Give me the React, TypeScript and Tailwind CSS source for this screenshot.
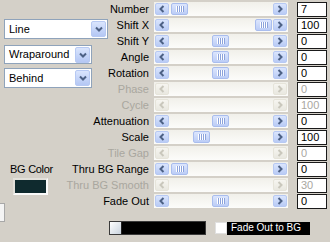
import React from "react";

type Row = { label: string; value: string; enabled: boolean; pos: number };

const rows: Row[] = [
  { label: "Number", value: "7", enabled: true, pos: 2 },
  { label: "Shift X", value: "100", enabled: true, pos: 86 },
  { label: "Shift Y", value: "0", enabled: true, pos: 43 },
  { label: "Angle", value: "0", enabled: true, pos: 43 },
  { label: "Rotation", value: "0", enabled: true, pos: 43 },
  { label: "Phase", value: "0", enabled: false, pos: 0 },
  { label: "Cycle", value: "100", enabled: false, pos: 0 },
  { label: "Attenuation", value: "0", enabled: true, pos: 43 },
  { label: "Scale", value: "100", enabled: true, pos: 24 },
  { label: "Tile Gap", value: "0", enabled: false, pos: 0 },
  { label: "Thru BG Range", value: "0", enabled: true, pos: 2 },
  { label: "Thru BG Smooth", value: "30", enabled: false, pos: 0 },
  { label: "Fade Out", value: "0", enabled: true, pos: 43 },
];

function Arrow({ dir, enabled }: { dir: "left" | "right"; enabled: boolean }) {
  const d = dir === "left" ? "M4.5 1 L1.5 4 L4.5 7" : "M1.5 1 L4.5 4 L1.5 7";
  return (
    <div
      className={
        enabled
          ? "flex h-[12px] w-[14px] items-center justify-center rounded-[2px] border border-[#b7c9f3] bg-linear-to-b from-[#dae5fd] to-[#b9cbf5]"
          : "flex h-[12px] w-[14px] items-center justify-center rounded-[2px] border border-[#e6e4da] bg-linear-to-b from-[#f6f5f0] to-[#e9e8e0]"
      }
    >
      <svg width="6" height="8" viewBox="0 0 6 8">
        <path d={d} stroke={enabled ? "#4d6185" : "#c9c7bc"} strokeWidth="2" fill="none" />
      </svg>
    </div>
  );
}

function Thumb() {
  return (
    <div className="flex h-[12px] w-[17px] items-center justify-center rounded-[2px] border border-[#a9bdee] bg-linear-to-b from-[#dce6fd] to-[#bccdf6]">
      <svg width="8" height="6" viewBox="0 0 8 6">
        <rect x="0" y="0" width="1" height="6" fill="#ffffff" />
        <rect x="1" y="0" width="1" height="6" fill="#8ca3dc" />
        <rect x="2" y="0" width="1" height="6" fill="#ffffff" />
        <rect x="3" y="0" width="1" height="6" fill="#8ca3dc" />
        <rect x="4" y="0" width="1" height="6" fill="#ffffff" />
        <rect x="5" y="0" width="1" height="6" fill="#8ca3dc" />
        <rect x="6" y="0" width="1" height="6" fill="#ffffff" />
        <rect x="7" y="0" width="1" height="6" fill="#8ca3dc" />
      </svg>
    </div>
  );
}

function ScrollBar({ enabled, pos }: { enabled: boolean; pos: number }) {
  return (
    <div className="flex h-[14px] w-[134px] items-center bg-linear-to-b from-[#f1f0ea] to-[#fcfcfa] px-px">
      <Arrow dir="left" enabled={enabled} />
      <div className="flex h-full flex-1 items-center">
        {enabled && (
          <>
            <div className="shrink-0" style={{ width: pos }} />
            <Thumb />
          </>
        )}
      </div>
      <Arrow dir="right" enabled={enabled} />
    </div>
  );
}

function Combo({ text, w, h }: { text: string; w: string; h: string }) {
  return (
    <div className={`flex items-center border border-[#8fa3bb] bg-white pl-[4px] pr-px ${w} ${h}`}>
      <span className="flex-1 text-[11px] leading-none text-black">{text}</span>
      <div className="flex h-[16px] w-[15px] items-center justify-center rounded-[2px] border border-[#b7c9f3] bg-linear-to-b from-[#dae5fd] to-[#b4c7f4]">
        <svg width="8" height="6" viewBox="0 0 8 6">
          <path d="M1 1.5 L4 4.5 L7 1.5" stroke="#4d6185" strokeWidth="2" fill="none" />
        </svg>
      </div>
    </div>
  );
}

export default function App() {
  return (
    <div className="flex h-[242px] w-[330px] overflow-hidden bg-[#d4d0c8] font-['Liberation_Sans',Arial,sans-serif] text-black">
      <div className="flex w-[110px] shrink-0 flex-col items-start">
        <div className="ml-[4px] mt-[19px]">
          <Combo text="Line" w="w-[104px]" h="h-[20px]" />
        </div>
        <div className="ml-[4px] mt-[6px]">
          <Combo text="Wraparound" w="w-[88px]" h="h-[19px]" />
        </div>
        <div className="ml-[4px] mt-[4px]">
          <Combo text="Behind" w="w-[88px]" h="h-[20px]" />
        </div>
        <div className="ml-[4px] mt-[74px] w-[55px] text-center text-[11px] leading-[14px] tracking-[-0.3px]">BG Color</div>
        <div className="ml-[13px] mt-[2px] h-[17px] w-[35px] border-2 border-t-[#e2e0da] border-l-[#e2e0da] border-r-[#fafafa] border-b-[#fafafa] bg-[#0f2a2e]" />
        <div className="mt-[8px] h-[19px] w-[5px] border border-l-0 border-[#a8a8a8] bg-[#f4f4f4]" />
      </div>
      <div className="flex flex-col pt-px">
        {rows.map((r) => (
          <div key={r.label} className="flex h-[16px] items-center">
            <div
              className={`flex w-[39px] justify-end whitespace-nowrap text-[11px] leading-none ${
                r.enabled ? "text-black" : "text-[#a9a79f]"
              }`}
            >
              {r.label}
            </div>
            <div className="ml-[5px]">
              <ScrollBar enabled={r.enabled} pos={r.pos} />
            </div>
            <div
              className={`ml-[9px] flex h-[15px] w-[30px] items-center border border-[#1a1a1a] bg-white pl-[3px] text-[11px] leading-none ${
                r.enabled ? "text-black" : "text-[#a9a79f]"
              }`}
            >
              {r.value}
            </div>
          </div>
        ))}
        <div className="mt-[12px] flex h-[14px] items-center">
          <div className="-ml-px flex h-[14px] w-[97px] border border-[#3a3a3a] bg-black">
            <div className="h-full w-[12px] border-r border-[#222] bg-linear-to-br from-[#ffffff] to-[#c9d3de]" />
          </div>
          <div className="ml-[9px] h-[12px] w-[12px] border border-[#e0e0e0] bg-white" />
          <div className="flex h-[13px] w-[83px] items-center bg-black pl-[4px] text-[10px] leading-none whitespace-nowrap text-white">
            Fade Out to BG
          </div>
        </div>
      </div>
    </div>
  );
}
